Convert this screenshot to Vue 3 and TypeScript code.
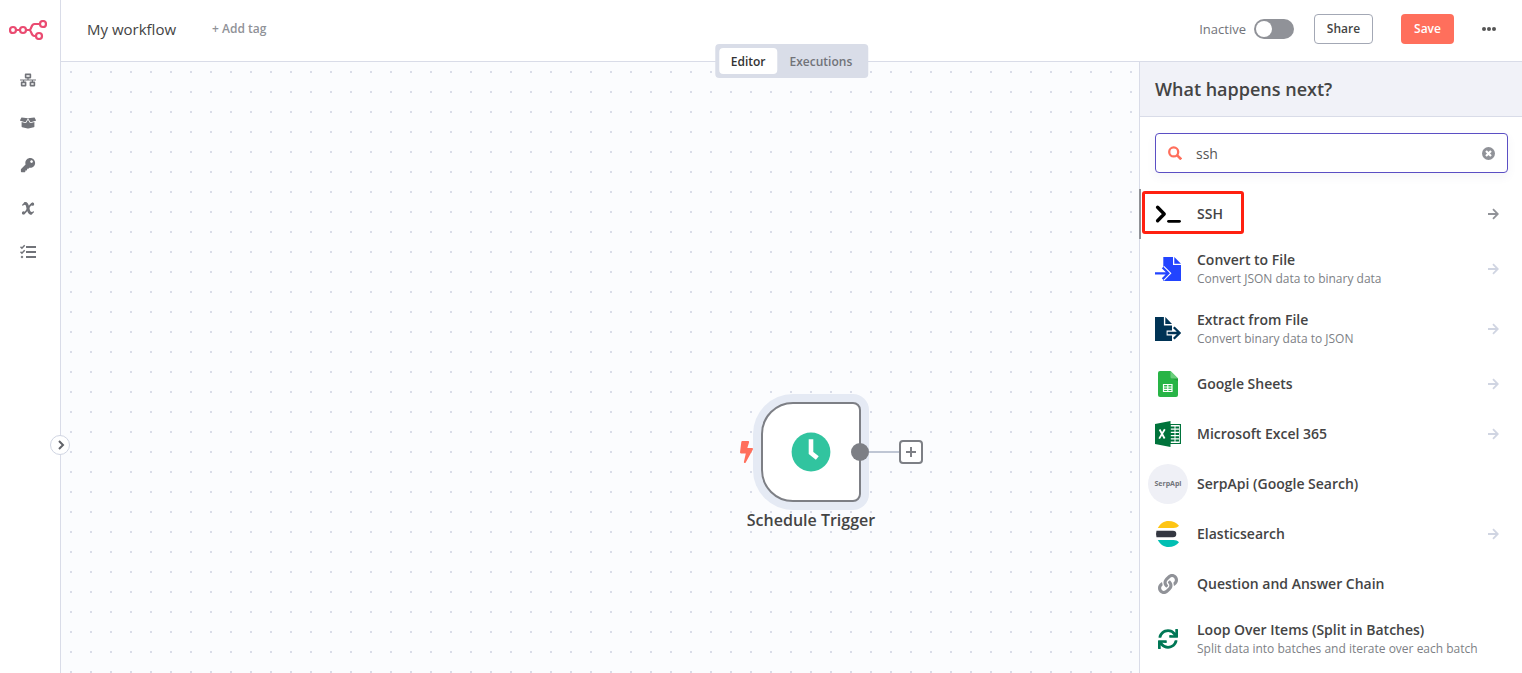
<script setup lang="ts">
import { ref } from 'vue'

interface NodeItem {
  id: string
  name: string
  description?: string
  arrow?: boolean
}

const query = ref('ssh')
const active = ref(false)

const menu = [
  {
    label: 'Workflows',
    viewBox: '0 0 640 512',
    d: 'M640 264v-16c0-8.84-7.16-16-16-16H344v-40h72c17.67 0 32-14.33 32-32V32c0-17.67-14.33-32-32-32H224c-17.67 0-32 14.33-32 32v128c0 17.67 14.33 32 32 32h72v40H16c-8.84 0-16 7.16-16 16v16c0 8.84 7.16 16 16 16h104v40H64c-17.67 0-32 14.33-32 32v128c0 17.67 14.33 32 32 32h160c17.67 0 32-14.33 32-32V352c0-17.67-14.33-32-32-32h-56v-40h304v40h-56c-17.67 0-32 14.33-32 32v128c0 17.67 14.33 32 32 32h160c17.67 0 32-14.33 32-32V352c0-17.67-14.33-32-32-32h-56v-40h104c8.84 0 16-7.16 16-16zM256 128V64h128v64H256zm-64 320H96v-64h96v64zm352 0h-96v-64h96v64z',
  },
  {
    label: 'Templates',
    viewBox: '0 0 640 512',
    d: 'M425.7 256c-16.9 0-32.8-9-41.4-23.4L320 126l-64.2 106.6c-8.7 14.5-24.6 23.5-41.5 23.5-4.5 0-9-.6-13.3-1.9L64 215v178c0 14.7 10 27.5 24.2 31l216.2 54.1c10.2 2.5 20.9 2.5 31 0L551.8 424c14.2-3.6 24.2-16.4 24.2-31V215l-137 39.1c-4.3 1.3-8.8 1.9-13.3 1.9zm212.6-112.2L586.8 41c-3.1-6.2-9.8-9.8-16.7-8.9L320 64l91.7 152.1c3.8 6.3 11.4 9.3 18.5 7.3l197.9-56.5c9.9-2.9 14.7-13.9 10.2-23.1zM53.2 41L1.7 143.8c-4.6 9.2.3 20.2 10.1 23l197.9 56.5c7.1 2 14.7-1 18.5-7.3L320 64 69.8 32.1c-6.9-.8-13.5 2.7-16.6 8.9z',
  },
  {
    label: 'Credentials',
    viewBox: '-32 0 576 576',
    d: 'M512 176.001C512 273.203 433.202 352 336 352c-11.22 0-22.19-1.062-32.827-3.069l-24.012 27.014A23.999 23.999 0 0 1 261.223 384H224v40c0 13.255-10.745 24-24 24h-40v40c0 13.255-10.745 24-24 24H24c-13.255 0-24-10.745-24-24v-78.059c0-6.365 2.529-12.47 7.029-16.971l161.802-161.802C163.108 213.814 160 195.271 160 176 160 78.798 238.797.001 335.999 0 433.488-.001 512 78.511 512 176.001zM336 128c0 26.51 21.49 48 48 48s48-21.49 48-48-21.49-48-48-48-48 21.49-48 48z',
  },
  { label: 'Variables', viewBox: '0 0 16 16', d: '' },
  { label: 'Executions', viewBox: '0 0 16 16', d: '' },
]

const items: NodeItem[] = [
  { id: 'ssh', name: 'SSH', arrow: true },
  { id: 'convert', name: 'Convert to File', description: 'Convert JSON data to binary data', arrow: true },
  { id: 'extract', name: 'Extract from File', description: 'Convert binary data to JSON', arrow: true },
  { id: 'sheets', name: 'Google Sheets', arrow: true },
  { id: 'excel', name: 'Microsoft Excel 365', arrow: true },
  { id: 'serp', name: 'SerpApi (Google Search)' },
  { id: 'elastic', name: 'Elasticsearch', arrow: true },
  { id: 'chain', name: 'Question and Answer Chain' },
  {
    id: 'loop',
    name: 'Loop Over Items (Split in Batches)',
    description: 'Split data into batches and iterate over each batch',
  },
]
</script>

<template>
  <div class="app">
    <aside class="sidebar">
      <a href="#" class="logo" aria-label="Home">
        <svg width="38" height="20" viewBox="0 0 38 20" fill="none" stroke="#ea4b71" stroke-width="2.200">
          <circle cx="4" cy="10" r="3" />
          <circle cx="14" cy="10" r="3" />
          <circle cx="34" cy="4" r="3" />
          <circle cx="30" cy="16" r="3" />
          <path d="M7 10h4M17 10h3c3 0 1.500-6 5.500-6H31M20 10c3 0 1.500 6 5.500 6H27" />
        </svg>
      </a>
      <nav class="menu">
        <a v-for="entry in menu" :key="entry.label" href="#" :aria-label="entry.label">
          <svg width="16" height="16" :viewBox="entry.viewBox">
            <path v-if="entry.d" :d="entry.d" fill="currentColor" />
            <g v-else-if="entry.label === 'Variables'" fill="none" stroke="currentColor" stroke-linecap="round">
              <path d="M5.200 2.600C9 2.200 6.800 12 11 12.200" stroke-width="3" />
              <path d="M12.800 2.600C9.500 2 6.500 13 3.200 12.400" stroke-width="1.700" />
              <path d="M12.500 3.200h.1M3.500 11.900h.1" stroke-width="3.200" />
              <path d="M2.800 4L5 2M11 12.800L13.300 11" stroke-width="1.400" />
            </g>
            <g v-else fill="none" stroke="currentColor">
              <path d="M6 3h10M6 8h10M6 13h10" stroke-width="2" />
              <path d="M.5 2.800L1.900 4.200L4.700 1.300M.5 7.800L1.900 9.200L4.700 6.300" stroke-width="1.500" />
              <circle cx="2" cy="13" r=".8" fill="currentColor" />
            </g>
          </svg>
        </a>
      </nav>
      <button class="expand" aria-label="Expand menu">
        <svg width="10" height="10" viewBox="0 0 10 10"><path d="M4 1l4 4l-4 4" fill="none" stroke="#606268" stroke-width="2" /></svg>
      </button>
    </aside>

    <div class="content">
      <header class="topbar">
        <h1>My workflow</h1>
        <button class="add-tag">+ Add tag</button>
        <div class="actions">
          <label class="activator">
            <span>Inactive</span>
            <input v-model="active" type="checkbox" role="switch" />
          </label>
          <button class="share">Share</button>
          <button class="save">Save</button>
          <button class="more" aria-label="More actions">
            <svg width="14" height="4" viewBox="0 0 14 4" fill="#555">
              <circle cx="2" cy="2" r="2" /><circle cx="7" cy="2" r="2" /><circle cx="12" cy="2" r="2" />
            </svg>
          </button>
        </div>
        <div class="tabs">
          <button class="selected">Editor</button>
          <button>Executions</button>
        </div>
      </header>

      <div class="workspace">
        <main class="canvas">
          <div class="trigger">
            <svg class="bolt" width="13" height="22" viewBox="0 0 320 512" preserveAspectRatio="none">
              <path fill="#ff6f5c" d="M296 160H180.600l42.600-129.800C227.200 15 215.700 0 200 0H56C44 0 33.800 8.900 32.200 20.800l-32 240C-1.700 275.200 9.500 288 24 288h118.700L96.600 482.500c-3.600 15.200 8 29.500 23.300 29.500 8.400 0 16.400-4.400 20.800-12l176-304c9.300-15.900-2.200-36-20.700-36z" />
            </svg>
            <div class="card">
              <svg width="40" height="40" viewBox="0 0 40 40">
                <circle cx="20" cy="20" r="19.400" fill="#31c49f" />
                <path d="M20 7.200V21L26.300 26" fill="none" stroke="#fff" stroke-width="4.600" />
              </svg>
            </div>
            <span class="port"></span>
            <span class="wire"></span>
            <button class="plus" aria-label="Add node">
              <svg width="12" height="12" viewBox="0 0 12 12"><path d="M6 1v10M1 6h10" stroke="#7d7f85" stroke-width="2" /></svg>
            </button>
            <span class="title">Schedule Trigger</span>
          </div>
        </main>

        <section class="panel">
          <h2>What happens next?</h2>
          <div class="search">
            <label for="node-search" aria-label="Search nodes">
              <svg width="14" height="14" viewBox="0 0 14 14" fill="none" stroke="#ff6f5c" stroke-width="2.300">
                <circle cx="5.700" cy="5.900" r="4.500" /><path d="M9 9.200l4.200 4.200" stroke-width="2.600" />
              </svg>
            </label>
            <input id="node-search" v-model="query" type="text" />
            <button aria-label="Clear search" @click="query = ''">
              <svg width="13" height="13" viewBox="0 0 13 13">
                <circle cx="6.500" cy="6.500" r="6.500" fill="#909298" />
                <path d="M4 4l5 5M9 4l-5 5" stroke="#fff" stroke-width="2.200" />
              </svg>
            </button>
          </div>

          <ul class="results">
            <li v-for="(item, index) in items" :key="item.id" :class="{ current: index === 0 }">
              <button class="item" :class="{ tall: item.description }">
                <span class="icon">
                  <svg v-if="item.id === 'ssh'" width="26" height="26" viewBox="0 0 26 26" fill="none" stroke="#000" stroke-linecap="round" stroke-linejoin="round">
                    <path d="M2.600 6.300l6.600 6.700l-6.600 6.700" stroke-width="3.400" /><path d="M13.500 20.300h11" stroke-width="2.800" />
                  </svg>
                  <svg v-else-if="item.id === 'convert'" width="26" height="26" viewBox="0 0 26 26">
                    <path fill="#2244ff" d="M8.300 1H18v8h8V25H8.300zM19.300 1L26 7.700H19.300z" />
                    <g fill="none">
                      <path d="M0 17.300h13M7.600 11.500L13.400 17.300L7.600 23.100" stroke="#fff" stroke-width="4.400" />
                      <path d="M0 17.300h13M7.600 11.500L13.400 17.300L7.600 23.100" stroke="#2244ff" stroke-width="2.200" />
                    </g>
                  </svg>
                  <svg v-else-if="item.id === 'extract'" width="26" height="26" viewBox="0 0 26 26">
                    <path fill="#003355" d="M0 1h8.900v8.500H17V25H0zM10.300 1L17 8H10.300z" />
                    <g fill="none">
                      <path d="M11.600 17h13M18.800 11.200L24.600 17L18.800 22.800" stroke="#fff" stroke-width="5" />
                      <path d="M12.600 17h12M18.800 11.200L24.600 17L18.800 22.800" stroke="#003355" stroke-width="2.300" />
                    </g>
                  </svg>
                  <svg v-else-if="item.id === 'sheets'" width="26" height="26" viewBox="0 0 26 26">
                    <path fill="#28b446" d="M5 0h10.500L23 7.500V24a2 2 0 0 1-2 2H5a2 2 0 0 1-2-2V2a2 2 0 0 1 2-2z" />
                    <path fill="#219b39" d="M15.500 7L23 10V7.500z" /><path fill="#6ace7c" d="M15.500 0L23 7.500h-6a1.500 1.500 0 0 1-1.500-1.500z" />
                    <path d="M8.500 13.500h8.500v7H8.500zM8.500 16h8.500M8.500 18.300h8.500M12.800 13.500v7" fill="none" stroke="#fff" stroke-width="1.200" />
                  </svg>
                  <svg v-else-if="item.id === 'excel'" width="26" height="26" viewBox="0 0 26 26">
                    <path fill="#fff" stroke="#00733b" stroke-width="1.200" d="M15 3.500h10.400v19H15z" />
                    <path d="M15 6.500h4.500M15 9.800h4.500M15 13h4.500M15 16.300h4.500M15 19.500h4.500M20.500 6.500H24M20.500 9.800H24M20.500 13H24M20.500 16.300H24M20.500 19.500H24" stroke="#00733b" stroke-width="2" />
                    <path fill="#00733b" d="M0 2.900L15.500 0v26L0 23.100z" />
                    <path d="M4.600 8.500l5 9M9.800 8.300l-5.600 9.300" stroke="#fff" stroke-width="1.800" />
                  </svg>
                  <span v-else-if="item.id === 'serp'" class="serp">SerpApi</span>
                  <svg v-else-if="item.id === 'elastic'" width="26" height="26" viewBox="0 0 26 26">
                    <path fill="#fec514" d="M2.800 7C5.200 2.600 9 0 13.500 0C18 0 21.700 1.800 24 4.800C22.400 6.300 21 7 18.500 7z" />
                    <path fill="#343741" d="M1.500 9.700H18a3.300 3.300 0 0 1 0 6.600H1.500a12 12 0 0 1 0-6.600z" />
                    <path fill="#00bfb3" d="M2.800 19H18.500c2.500 0 4 .8 5.500 2.300C21.700 24.300 18 26 13.500 26C9 26 5.200 23.400 2.800 19z" />
                  </svg>
                  <svg v-else-if="item.id === 'chain'" width="20" height="20" viewBox="0 0 512 512" fill="#909298">
                    <path d="M326.612 185.391c59.747 59.809 58.927 155.698.36 214.590-.11.12-.24.25-.36.37l-67.200 67.200c-59.270 59.270-155.699 59.262-214.960 0-59.270-59.260-59.270-155.700 0-214.960l37.106-37.106c9.840-9.840 26.786-3.300 27.294 10.606.648 17.722 3.826 35.527 9.690 52.721 1.986 5.822.567 12.262-3.783 16.612l-13.087 13.087c-28.026 28.026-28.905 73.660-1.155 101.960 28.024 28.579 74.086 28.749 102.325.51l67.200-67.190c28.191-28.191 28.073-73.757 0-101.830-3.701-3.694-7.429-6.564-10.341-8.569a16.037 16.037 0 0 1-6.947-12.606c-.396-10.567 3.348-21.456 11.698-29.806l21.054-21.055c5.521-5.521 14.182-6.199 20.584-1.731a152.482 152.482 0 0 1 20.522 17.197zM467.547 44.449c-59.261-59.262-155.690-59.270-214.960 0l-67.200 67.200c-.12.12-.25.25-.36.37-58.566 58.892-59.387 154.781.36 214.590a152.454 152.454 0 0 0 20.521 17.196c6.402 4.468 15.064 3.789 20.584-1.731l21.054-21.055c8.350-8.350 12.094-19.239 11.698-29.806a16.037 16.037 0 0 0-6.947-12.606c-2.912-2.005-6.640-4.875-10.341-8.569-28.073-28.073-28.191-73.639 0-101.830l67.200-67.190c28.239-28.239 74.300-28.069 102.325.51 27.750 28.300 26.872 73.934-1.155 101.960l-13.087 13.087c-4.350 4.350-5.769 10.790-3.783 16.612 5.864 17.194 9.042 34.999 9.690 52.721.509 13.906 17.454 20.446 27.294 10.606l37.106-37.106c59.271-59.259 59.271-155.699.001-214.959z" />
                  </svg>
                  <svg v-else width="20" height="20" viewBox="0 0 512 512" fill="#007755">
                    <path d="M440.650 12.570l4 82.770A247.160 247.160 0 0 0 255.830 8C134.730 8 33.910 94.920 12.290 209.820A12 12 0 0 0 24.090 224h49.050a12 12 0 0 0 11.670-9.260 175.910 175.910 0 0 1 317-56.940l-101.460-4.860a12 12 0 0 0-12.570 12v47.410a12 12 0 0 0 12 12H500a12 12 0 0 0 12-12V12a12 12 0 0 0-12-12h-47.370a12 12 0 0 0-11.980 12.570zM255.830 432a175.610 175.610 0 0 1-146-77.800l101.800 4.870a12 12 0 0 0 12.570-12v-47.400a12 12 0 0 0-12-12H12a12 12 0 0 0-12 12V500a12 12 0 0 0 12 12h47.350a12 12 0 0 0 12-12.600l-4.150-82.570A247.170 247.170 0 0 0 255.830 504c121.110 0 221.930-86.920 243.550-201.820a12 12 0 0 0-11.800-14.180h-49.050a12 12 0 0 0-11.670 9.260A175.860 175.860 0 0 1 255.830 432z" />
                  </svg>
                </span>
                <span class="text">
                  <span class="name">{{ item.name }}</span>
                  <span v-if="item.description" class="description">{{ item.description }}</span>
                </span>
                <svg v-if="item.arrow" class="arrow" width="12" height="12" viewBox="0 0 12 12" fill="none" stroke="currentColor" stroke-width="1.800">
                  <path d="M1 6h9.500M6 1.200L10.800 6L6 10.800" />
                </svg>
              </button>
              <span v-if="index === 0" class="highlight"></span>
            </li>
          </ul>
        </section>
      </div>
    </div>
  </div>
</template>

<style>
body {
  margin: 0;
}
</style>

<style scoped>
* {
  box-sizing: border-box;
}
.app {
  display: flex;
  height: 100vh;
  overflow: hidden;
  background: #fff;
  color: #444;
  font-family: "Open Sans", "Noto Sans", sans-serif;
  font-size: 14px;
}
button {
  padding: 0;
  border: 0;
  background: none;
  color: inherit;
  font: inherit;
  cursor: pointer;
}
svg {
  display: block;
  flex: none;
}
.sidebar {
  position: relative;
  z-index: 2;
  flex: none;
  width: 61px;
  padding: 20px 0 0 9px;
  border-right: 1px solid #d9dce8;
}
.logo {
  display: block;
}
.menu {
  display: flex;
  flex-direction: column;
  gap: 27px;
  padding: 32px 0 0 11px;
}
.menu a {
  color: #717379;
}
.expand {
  position: absolute;
  top: 435px;
  right: -10px;
  display: grid;
  place-items: center;
  width: 20px;
  height: 20px;
  border: 1px solid #d0d5e2;
  border-radius: 50%;
  background: #fff;
}
.content {
  flex: 1;
  display: flex;
  flex-direction: column;
  min-width: 0;
}
.topbar {
  position: relative;
  z-index: 1;
  flex: none;
  display: flex;
  align-items: center;
  height: 62px;
  padding: 0 26px 4px;
  border-bottom: 1px solid #d9dce8;
}
h1 {
  margin: 0;
  font-size: 15px;
  font-weight: 400;
  line-height: 22px;
}
.add-tag {
  margin-left: 36px;
  color: #909298;
  font-size: 12px;
  font-weight: 600;
}
.actions {
  display: flex;
  align-items: center;
  margin-left: auto;
}
.activator {
  display: flex;
  align-items: center;
  gap: 8px;
  color: #717379;
  font-size: 13px;
}
.activator input {
  appearance: none;
  display: block;
  width: 40px;
  height: 20px;
  margin: 0;
  padding: 2px;
  border-radius: 10px;
  background: #909298;
}
.activator input::before {
  content: "";
  display: block;
  width: 16px;
  height: 16px;
  border-radius: 50%;
  background: #fff;
}
.activator input:checked::before {
  margin-left: auto;
}
.share,
.save {
  height: 30px;
  border-radius: 4px;
  font-size: 12px;
  font-weight: 600;
}
.share {
  width: 59px;
  margin-left: 20px;
  border: 1px solid #a3a8b5;
}
.save {
  width: 53px;
  margin-left: 28px;
  background: #ff6f5c;
  color: #fff;
}
.more {
  margin: 0 0 0 28px;
}
.tabs {
  position: absolute;
  top: 44px;
  left: 50%;
  display: flex;
  padding: 4px;
  border-radius: 4px;
  background: #d9dde8;
  transform: translateX(-50%);
}
.tabs button {
  height: 26px;
  padding: 0 12px;
  border-radius: 4px;
  color: #717379;
  font-size: 12px;
  font-weight: 600;
}
.tabs .selected {
  background: #fff;
  color: #333;
}
.workspace {
  flex: 1;
  display: flex;
  min-height: 0;
}
.canvas {
  position: relative;
  flex: 1;
  background: conic-gradient(from 270deg at 2px 2px, #d9dce8 90deg, #fbfcfe 0) 9px 9px / 20px 20px;
}
.trigger {
  position: absolute;
  top: 340px;
  left: 700px;
  width: 100px;
  height: 100px;
}
.card {
  display: grid;
  place-items: center;
  height: 100px;
  border: 2px solid #7d7f85;
  border-radius: 32px 8px 8px 32px;
  background: #fff;
  box-shadow: 0 0 0 8px #e5eaf4;
}
.bolt {
  position: absolute;
  top: 39px;
  left: -21px;
}
.port {
  position: absolute;
  top: 41px;
  left: 90px;
  width: 18px;
  height: 18px;
  border-radius: 50%;
  background: #7d7f85;
}
.wire {
  position: absolute;
  top: 49px;
  left: 108px;
  width: 30px;
  height: 2px;
  background: #bfc6d4;
}
.plus {
  position: absolute;
  top: 38px;
  left: 138px;
  display: grid;
  place-items: center;
  width: 24px;
  height: 24px;
  border: 2px solid #7d7f85;
  border-radius: 4px;
  background: #fff;
}
.title {
  position: absolute;
  top: 107px;
  left: 50%;
  font-size: 16px;
  font-weight: 600;
  line-height: 22px;
  white-space: nowrap;
  transform: translateX(-50%);
}
.panel {
  flex: none;
  width: 383px;
  border-left: 1px solid #d9dce8;
  background: #fff;
}
h2 {
  margin: 0;
  padding: 15px;
  border-bottom: 1px solid #d9dce8;
  background: #f1f2f8;
  font-size: 18px;
  font-weight: 600;
  line-height: 24px;
}
.search {
  display: flex;
  align-items: center;
  height: 40px;
  margin: 16px 14px 16px 15px;
  padding: 0 12px;
  border: 1px solid #5b4fc4;
  border-radius: 4px;
  box-shadow: 0 4px 10px rgba(80, 90, 130, 0.06);
}
.search input {
  flex: 1;
  min-width: 0;
  margin-left: 14px;
  padding: 0;
  border: 0;
  outline: 0;
  background: none;
  color: #555;
  font: inherit;
}
.results {
  margin: 0;
  padding: 0;
  list-style: none;
}
.results li {
  position: relative;
}
.current::before {
  content: "";
  position: absolute;
  top: 0;
  bottom: 0;
  left: -1px;
  width: 2px;
  background: #909298;
}
.highlight {
  position: absolute;
  top: 2px;
  left: 2px;
  width: 102px;
  height: 43px;
  border: 3px solid #ff2010;
  border-radius: 3px;
  pointer-events: none;
}
.item {
  display: flex;
  align-items: center;
  width: 100%;
  height: 50px;
  padding: 0 23px 0 8px;
  text-align: left;
}
.tall {
  height: 60px;
}
.icon {
  flex: none;
  display: grid;
  place-items: center;
  width: 40px;
  height: 40px;
  margin-right: 9px;
}
.serp {
  width: 40px;
  border-radius: 50%;
  background: #eff0f6;
  color: #717379;
  font-size: 7px;
  font-weight: 700;
  line-height: 40px;
  text-align: center;
}
.text {
  flex: 1;
  display: flex;
  flex-direction: column;
}
.tall .text {
  padding-bottom: 2px;
}
.name {
  font-weight: 600;
  line-height: 20px;
}
.description {
  color: #7d7f85;
  font-size: 12px;
  line-height: 17px;
}
.arrow {
  color: #d0d5e2;
}
.current .arrow {
  color: #909298;
}
</style>
